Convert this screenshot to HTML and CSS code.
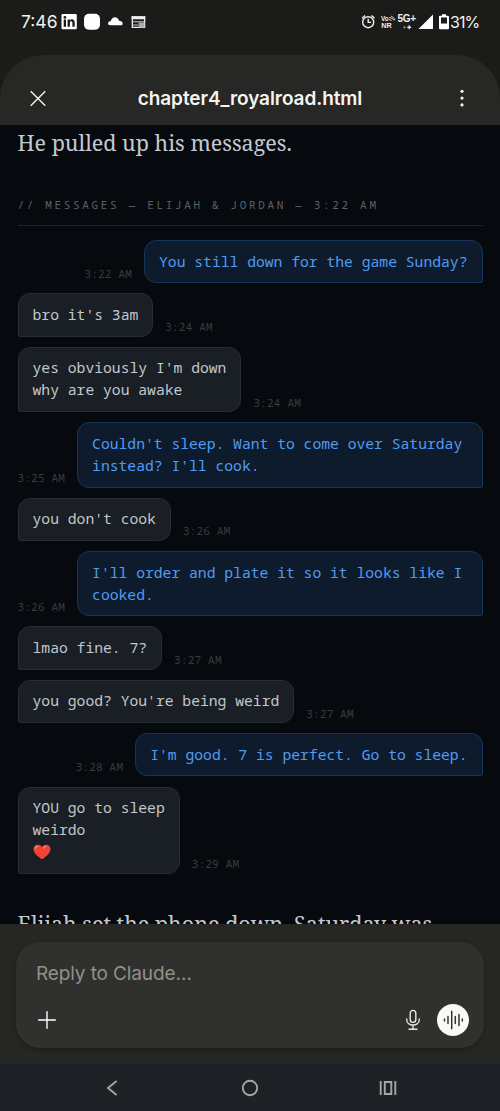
FILE: index.html
```html
<!DOCTYPE html>
<html lang="en">
<head>
<meta charset="utf-8">
<title>chapter4_royalroad.html</title>
<link rel="stylesheet" href="styles.css">
</head>
<body>
<div class="status">
  <span class="clock">7:46</span>
  <svg class="status-left" width="90" height="20" viewBox="60 12 90 20">
    <rect x="61.5" y="14" width="15.3" height="15.3" rx="1.2" fill="#fff"/>
    <g fill="#1b1b19"><rect x="63.7" y="19.5" width="2.3" height="7.3"/><circle cx="64.9" cy="17.4" r="1.4"/><path d="M67.6 19.5h2.2v1c1.3-2 4.9-1.4 4.9 1.8v4.5h-2.3v-4c0-2.2-2.5-2-2.5 0v4h-2.3z"/></g>
    <rect x="84" y="13.800" width="16" height="16" rx="5" fill="#fff"/>
    <path d="M110.500 25.300c-3.500 0-3-4 .3-4.300 1-5 7.200-5 8.200-.3 4.500 0 4.500 4.600 2 4.600z" fill="#fff"/>
    <path d="M132.300 17h12.300v10.300h-12.300z" fill="none" stroke="#eee" stroke-width="1.300"/>
    <path d="M131.700 16h1.500v1h1v-1h1.500v1h1v-1h1.500v1h1v-1h1.500v1h1v-1h1.500v1h1v-1h1v3.300h-13.500z" fill="#eee"/>
    <path d="M133 21.800h11M133 25h5" stroke="#ccc" stroke-width="1"/><path d="M138.500 22.500h6v5h-6z" fill="#aaa"/>
  </svg>
  <span class="grow"></span>
  <svg class="status-right" width="90" height="20" viewBox="360 12 90 20">
    <g fill="none" stroke="#eee" stroke-width="1.400"><circle cx="368.200" cy="22.200" r="5.500"/><path d="M368.200 18.700v3.700h3M362 18.200l3-2.700M374.500 18.200l-3-2.700"/></g>
    <g class="tiny" fill="#eee"><text x="381" y="20.500" font-size="6.300">Vo</text><text x="381.200" y="28" font-size="7.200" textLength="10.500">NR</text></g>
    <path d="M389 17.500q4 0 5 3M389 19.500q2 0 2.500 1.500M391 16q3 1 4 4" fill="none" stroke="#ddd" stroke-width=".9"/>
    <text class="net" x="397.500" y="22" font-size="10" textLength="18.500" fill="#eee">5G+</text>
    <path d="M403 27.300h3M404.500 25.800v3" stroke="#777"/><path d="M407.200 27.300h4M409.200 25.300v4" stroke="#eee" stroke-width="1.300"/>
    <path d="M433 14.500v14.500h-14.500z" fill="#fff"/>
    <path d="M442 14.300h4v1.500h2q1 0 1 1v11.500q0 1-1 1h-8q-1 0-1-1v-11.500q0-1 1-1h2z" fill="#fff"/><path d="M441 17.500h6v6h-6z" fill="#1b1b19"/>
  </svg>
  <span class="percent">31%</span>
</div>
<header class="header">
  <svg width="20" height="20" viewBox="0 0 20 20"><path d="M2.700 2.200l14.600 14.500M17.300 2.200L2.700 16.700" stroke="#f4f3ee" stroke-width="1.400" fill="none"/></svg>
  <h1 class="title">chapter4_royalroad.html</h1>
  <svg width="20" height="20" viewBox="0 0 20 20" fill="#f4f3ee"><circle cx="10" cy="2.300" r="1.600"/><circle cx="10" cy="9.100" r="1.600"/><circle cx="10" cy="15.900" r="1.600"/></svg>
</header>
<main class="story">
  <p class="prose">He pulled up his messages.</p>
  <h2 class="label">// MESSAGES — ELIJAH &amp; JORDAN — 3:22 AM</h2>
  <div class="chat">
    <div class="row sent"><div class="bubble">You still down for the game Sunday?</div><time class="time">3:22 AM</time></div>
    <div class="row"><div class="bubble">bro it's 3am</div><time class="time">3:24 AM</time></div>
    <div class="row"><div class="bubble">yes obviously I'm down<br>why are you awake</div><time class="time">3:24 AM</time></div>
    <div class="row sent"><div class="bubble wide">Couldn't sleep. Want to come over Saturday<br>instead? I'll cook.</div><time class="time">3:25 AM</time></div>
    <div class="row"><div class="bubble">you don't cook</div><time class="time">3:26 AM</time></div>
    <div class="row sent"><div class="bubble wide">I'll order and plate it so it looks like I<br>cooked.</div><time class="time">3:26 AM</time></div>
    <div class="row"><div class="bubble">lmao fine. 7?</div><time class="time">3:27 AM</time></div>
    <div class="row"><div class="bubble">you good? You're being weird</div><time class="time">3:27 AM</time></div>
    <div class="row sent"><div class="bubble">I'm good. 7 is perfect. Go to sleep.</div><time class="time">3:28 AM</time></div>
    <div class="row"><div class="bubble">YOU go to sleep<br>weirdo<br><svg class="heart" width="18" height="16" viewBox="0 0 18 16"><path d="M9 15.300C6 13.200.5 9.500.5 5.200.5.300 6.500-.8 9 3c2.500-3.800 8.500-2.700 8.500 2.200 0 4.300-5.500 8-8.500 10.100z" fill="#f44336"/><path d="M2.300 4.500q.5-2 2.300-2.400M10.600 4q.8-1.600 2.300-1.900" stroke="#ff8a75" stroke-width="1.200" fill="none" stroke-linecap="round"/></svg></div><time class="time">3:29 AM</time></div>
  </div>
  <p class="prose next">Elijah set the phone down. Saturday was</p>
</main>
<footer class="dock">
  <div class="composer">
    <div class="placeholder">Reply to Claude…</div>
    <div class="actions">
      <svg width="20" height="20" viewBox="0 0 20 20"><path d="M10 1.200v17.600M1.200 10h17.600" stroke="#fff" stroke-width="1.400"/></svg>
      <span class="grow"></span>
      <svg width="20" height="24" viewBox="0 0 20 24" fill="none" stroke="#e8e6df" stroke-width="1.400"><rect x="7.200" y="2.400" width="5.600" height="12" rx="2.800"/><path d="M3.700 10.500v1c0 7.300 12.600 7.300 12.600 0v-1M10 17v4M5.500 21.200h9"/></svg>
      <span class="voice"><svg width="22" height="22" viewBox="0 0 22 22" stroke="#33322f" stroke-width="1.500" stroke-linecap="round"><path d="M2.500 10v2M6 7.500v7M9.700 2.200v17.600M13.300 7.500v7M17 5.500v11M20.300 10v2"/></svg></span>
    </div>
  </div>
</footer>
<nav class="nav">
  <svg width="20" height="20" viewBox="0 0 20 20"><path d="M14.600 3L6 10l8.600 7" fill="none" stroke="#a5a6a7" stroke-width="1.900"/></svg>
  <svg width="20" height="20" viewBox="0 0 20 20"><circle cx="10" cy="10" r="7.200" fill="none" stroke="#a5a6a7" stroke-width="1.900"/></svg>
  <svg width="20" height="20" viewBox="0 0 20 20"><path d="M2.700 3v14M17.300 3v14M6.800 4h6.500v12H6.800z" fill="none" stroke="#a5a6a7" stroke-width="1.900"/></svg>
</nav>
</body>
</html>
```
FILE: styles.css
```css
* { box-sizing: border-box; }
body {
  margin: 0;
  width: 500px;
  height: 1111px;
  overflow: hidden;
  display: flex;
  flex-direction: column;
  background: #1b1b19;
  font-family: Inter, "Noto Sans", sans-serif;
}
svg { display: block; flex: none; }
.grow { flex: 1; }
.status {
  height: 55px;
  flex: none;
  padding: 12px 21px 0;
  display: flex;
  align-items: flex-start;
  color: #f1f1ef;
  line-height: 20px;
  font-size: 17px;
}
.clock { width: 39px; font-size: 17.500px; }
.percent { width: 29px; font-size: 16px; letter-spacing: -1px; }
.tiny, .net { font-family: "Liberation Sans", sans-serif; font-weight: 700; }
.header {
  height: 70px;
  flex: none;
  padding: 17px 27.500px 0;
  display: flex;
  align-items: center;
  justify-content: space-between;
  border-radius: 43px 43px 0 0;
  background: #272725;
}
.title { margin: 0; color: #f5f4ef; font-size: 19px; font-weight: 600; line-height: 24px; letter-spacing: -.080px; }
.story {
  height: 799px;
  flex: none;
  overflow: hidden;
  padding: 0 17.500px;
  background: #06090d;
}
.prose {
  margin: 0;
  color: #c4c9cf;
  font-family: "Noto Serif", "Droid Serif", "DejaVu Serif Condensed", "DejaVu Serif", serif;
  font-size: 21.500px;
  line-height: 36px;
  white-space: nowrap;
}
.label {
  margin: 34px 0 14px;
  height: 31px;
  border-bottom: 1px solid #1e2328;
  color: #5a6068;
  font: 400 11px/20px "Noto Sans Mono", "Droid Sans Mono", "DejaVu Sans Mono", monospace;
  letter-spacing: 2.660px;
  white-space: nowrap;
}
.chat {
  display: flex;
  flex-direction: column;
  gap: 10.060px;
  font-family: "Noto Sans Mono", "Droid Sans Mono", "DejaVu Sans Mono", monospace;
}
.row { display: flex; align-items: flex-end; gap: 12px; }
.sent { flex-direction: row-reverse; }
.bubble {
  padding: 8.650px 14px 10.650px;
  border: 1px solid #282d31;
  border-radius: 12px 12px 12px 2px;
  background: #1a1e25;
  color: #c3c7cc;
  font-size: 14.690px;
  line-height: 22.050px;
  white-space: nowrap;
}
.sent .bubble { border-color: #15345c; border-radius: 12px 12px 2px 12px; background: #0e1b2d; color: #509bf2; }
.wide { flex: 1; }
.time { padding-bottom: 1.500px; color: #373c40; font-size: 11px; line-height: 16px; letter-spacing: .200px; white-space: nowrap; }
.heart { margin: 4px 0 2.050px; }
.next { padding-top: 32px; }
.dock { height: 140px; flex: none; padding: 18px 16px 0; background: #262624; }
.composer {
  height: 106px;
  padding: 19px 15px 0 20px;
  border-radius: 24px;
  background: #30302e;
  box-shadow: 0 2px 4px rgba(0, 0, 0, .25);
}
.placeholder { color: #929088; font-size: 19px; line-height: 26px; letter-spacing: -.120px; }
.actions { display: flex; align-items: center; margin-top: 17px; padding-left: 1px; }
.voice {
  width: 32px;
  height: 32px;
  margin-left: 14px;
  display: flex;
  align-items: center;
  justify-content: center;
  border-radius: 50%;
  background: #faf9f5;
}
.nav {
  height: 47px;
  flex: none;
  padding: 0 102px;
  display: flex;
  align-items: center;
  justify-content: space-between;
  background: #1e2226;
}
```
